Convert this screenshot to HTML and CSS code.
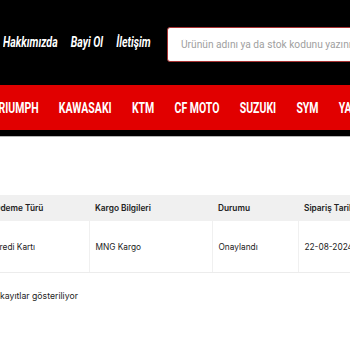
FILE: index.html
```html
<!DOCTYPE html>
<html lang="tr">
<head>
    <meta charset="UTF-8">
    <meta name="viewport" content="width=device-width, initial-scale=1.0">
    <title>Siparişlerim</title>
    <link rel="stylesheet" href="styles.css">
</head>
<body>
    <header class="top-bar">
        <div class="top-links-wrap">
            <nav class="top-links">
                <a href="#">Hakkımızda</a>
                <a href="#">Bayi Ol</a>
                <a href="#">İletişim</a>
            </nav>
        </div>
        <form class="search">
            <input type="text" placeholder="Ürünün adını ya da stok kodunu yazınız">
        </form>
    </header>

    <nav class="brand-bar">
        <ul class="brands">
            <li><a href="#">TRIUMPH</a></li>
            <li><a href="#">KAWASAKI</a></li>
            <li><a href="#">KTM</a></li>
            <li><a href="#">CF MOTO</a></li>
            <li><a href="#">SUZUKI</a></li>
            <li><a href="#">SYM</a></li>
            <li><a href="#">YAMAHA</a></li>
        </ul>
    </nav>

    <main class="orders">
        <table class="order-table">
            <colgroup>
                <col class="col-pay">
                <col class="col-cargo">
                <col class="col-status">
                <col class="col-date">
            </colgroup>
            <thead>
                <tr>
                    <th>Ödeme Türü</th>
                    <th>Kargo Bilgileri</th>
                    <th>Durumu</th>
                    <th>Sipariş Tarihi</th>
                </tr>
            </thead>
            <tbody>
                <tr>
                    <td>Kredi Kartı</td>
                    <td>MNG Kargo</td>
                    <td>Onaylandı</td>
                    <td>22-08-2024</td>
                </tr>
            </tbody>
        </table>
        <p class="info">kayıtlar gösteriliyor</p>
    </main>
</body>
</html>
```

FILE: styles.css
```css
body {
    margin: 0;
    overflow: hidden;
    background: #fff;
    font-family: Inter, "Noto Sans", sans-serif;
}

a {
    color: inherit;
    text-decoration: none;
}

/* top black header */
.top-bar {
    background: #000;
    height: 85px;
    display: flex;
    align-items: center;
    padding-left: 3px;
}

.top-links-wrap {
    flex: 0 0 164px;
    min-width: 0;
}

.top-links {
    display: flex;
    gap: 18px;
    white-space: nowrap;
    font-family: Roboto, sans-serif;
    font-style: italic;
    font-weight: bold;
    font-size: 14.5px;
    color: #fff;
    transform: scaleX(0.73);
    transform-origin: 0 50%;
}

.search {
    flex: 1;
    min-width: 0;
    margin: 0;
    padding-top: 4px;
}

.search input {
    box-sizing: border-box;
    width: 300px;
    height: 35px;
    border: 1px solid #a83232;
    border-radius: 3px;
    padding: 0 13px;
    font-family: Roboto, sans-serif;
    font-size: 10.2px;
    outline: none;
}

.search input::placeholder {
    color: #a0a0a0;
}

/* red brand menu */
.brand-bar {
    background: #e10000;
    height: 45px;
    border-bottom: 6px solid #000;
    box-shadow: 0 1px 0 #b5b5b5;
}

.brands {
    list-style: none;
    margin: 0 0 0 -8px;
    padding: 0;
    height: 100%;
    display: flex;
    align-items: center;
    gap: 27px;
    white-space: nowrap;
    font-family: Roboto, sans-serif;
    font-weight: bold;
    font-size: 14px;
    color: #fff;
    transform: scaleX(0.75);
    transform-origin: 0 50%;
}

/* orders table */
.orders {
    margin-left: -12px;
    padding-top: 50px;
}

.order-table {
    width: 430px;
    table-layout: fixed;
    border-collapse: collapse;
    border-top: 1px solid #f1f1f1;
    font-size: 8.3px;
    color: #222;
}

.col-pay { width: 101px; }
.col-cargo { width: 123px; }
.col-status { width: 86px; }
.col-date { width: 120px; }

.order-table thead th {
    background: #f0f0f0;
    height: 26px;
    padding: 0 6px;
    text-align: left;
    font-weight: 600;
    border-top: 9px solid #fff;
    white-space: nowrap;
    overflow: hidden;
}

.order-table td {
    height: 51px;
    padding: 0 6px;
    border-left: 1px solid #f0f0f0;
    border-bottom: 1px solid #ececec;
}

.order-table td:first-child {
    border-left: none;
}

.info {
    margin: 18px 0 0 12px;
    font-size: 8.7px;
    color: #222;
}
```
